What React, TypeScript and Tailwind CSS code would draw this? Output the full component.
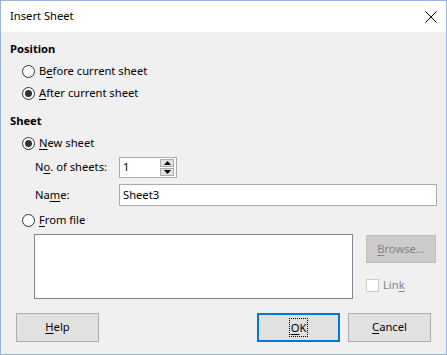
import React from "react";

const font = { fontFamily: '"Noto Sans", "Segoe UI", sans-serif' };

function Radio({ checked }: { checked?: boolean }) {
  return (
    <span className="w-[13px] h-[13px] rounded-full border border-[#333333] bg-white flex items-center justify-center shrink-0">
      {checked && <span className="w-[7px] h-[7px] rounded-full bg-[#333333]" />}
    </span>
  );
}

function U({ children }: { children: React.ReactNode }) {
  return <span className="underline underline-offset-[2px]">{children}</span>;
}

function Btn({ children, focus, x }: { children: React.ReactNode; focus?: boolean; x?: string }) {
  return (
    <div
      className={
        "w-[83px] h-[29px] bg-[#e1e1e1] flex items-center justify-center " +
        (focus ? "border-2 border-[#0078d7]" : "border border-[#adadad]") +
        (x ? " " + x : "")
      }
    >
      {focus ? (
        <span className="outline-1 outline-dotted outline-black px-[1px] py-[1px] leading-[15px]">{children}</span>
      ) : (
        <span>{children}</span>
      )}
    </div>
  );
}

export default function App() {
  return (
    <div
      style={font}
      className="w-[447px] h-[355px] border border-[#9bb3e0] flex flex-col text-[11.2px] text-black bg-[#f0f0f0]"
    >
      <div className="h-[31px] bg-white flex items-center justify-between pl-[9px] pr-[9px] shrink-0">
        <span>Insert Sheet</span>
        <svg width="12" height="12" viewBox="0 0 12 12">
          <path d="M0.5 0.5 L11.5 11.5 M11.5 0.5 L0.5 11.5" stroke="#000" strokeWidth="1" />
        </svg>
      </div>
      <div className="flex-1 flex flex-col pl-[9px] pr-[9px]">
        <div className="h-[22px] mt-[6px] flex items-center font-bold">Position</div>
        <div className="h-[22px] flex items-center pl-[12px] gap-[4px]">
          <Radio />
          <span>
            B<U>e</U>fore current sheet
          </span>
        </div>
        <div className="h-[22px] flex items-center pl-[12px] gap-[4px]">
          <Radio checked />
          <span>
            <U>A</U>fter current sheet
          </span>
        </div>
        <div className="h-[22px] mt-[6px] flex items-center font-bold">Sheet</div>
        <div className="h-[22px] flex items-center pl-[12px] gap-[4px]">
          <Radio checked />
          <span>
            <U>N</U>ew sheet
          </span>
        </div>
        <div className="h-[21px] mt-[3px] flex items-center pl-[25px]">
          <span className="w-[84px]">
            N<U>o</U>. of sheets:
          </span>
          <div className="w-[58px] h-[21px] border border-[#adadad] bg-white flex items-center">
            <span className="flex-1 pl-[3px]">1</span>
            <div className="flex flex-col gap-[1px] mr-[2px]">
              <div className="w-[14px] h-[8px] bg-[#e1e1e1] border border-[#adadad] flex items-center justify-center">
                <svg width="7" height="4" viewBox="0 0 7 4">
                  <path d="M3.5 0 L7 4 L0 4 Z" fill="#000" />
                </svg>
              </div>
              <div className="w-[14px] h-[8px] bg-[#e1e1e1] border border-[#adadad] flex items-center justify-center">
                <svg width="7" height="4" viewBox="0 0 7 4">
                  <path d="M0 0 L7 0 L3.5 4 Z" fill="#000" />
                </svg>
              </div>
            </div>
          </div>
        </div>
        <div className="h-[22px] mt-[6px] flex items-center pl-[25px]">
          <span className="w-[84px]">
            Na<U>m</U>e:
          </span>
          <div className="flex-1 h-[22px] border border-[#adadad] bg-white flex items-center pl-[3px]">Sheet3</div>
        </div>
        <div className="h-[22px] mt-[3px] flex items-center pl-[12px] gap-[4px]">
          <Radio />
          <span>
            <U>F</U>rom file
          </span>
        </div>
        <div className="flex mt-[3px] pl-[24px]">
          <div className="w-[319px] h-[65px] border border-[#828790] bg-white" />
          <div className="flex flex-col ml-[13px]">
            <div className="w-[70px] h-[28px] mt-[1px] bg-[#cccccc] border border-[#bfbfbf] flex items-center justify-center text-[#838383]">
              <span>
                <U>B</U>rowse...
              </span>
            </div>
            <div className="flex items-center mt-[14px] gap-[4px]">
              <span className="w-[13px] h-[13px] border border-[#cccccc] bg-white" />
              <span className="text-[#838383]">
                Lin<U>k</U>
              </span>
            </div>
          </div>
        </div>
        <div className="flex mt-[14px] pl-[6px]">
          <Btn>
            <U>H</U>elp
          </Btn>
          <Btn focus x="ml-[158px]">
            <U>O</U>K
          </Btn>
          <Btn x="ml-[8px]">
            <U>C</U>ancel
          </Btn>
        </div>
      </div>
    </div>
  );
}
